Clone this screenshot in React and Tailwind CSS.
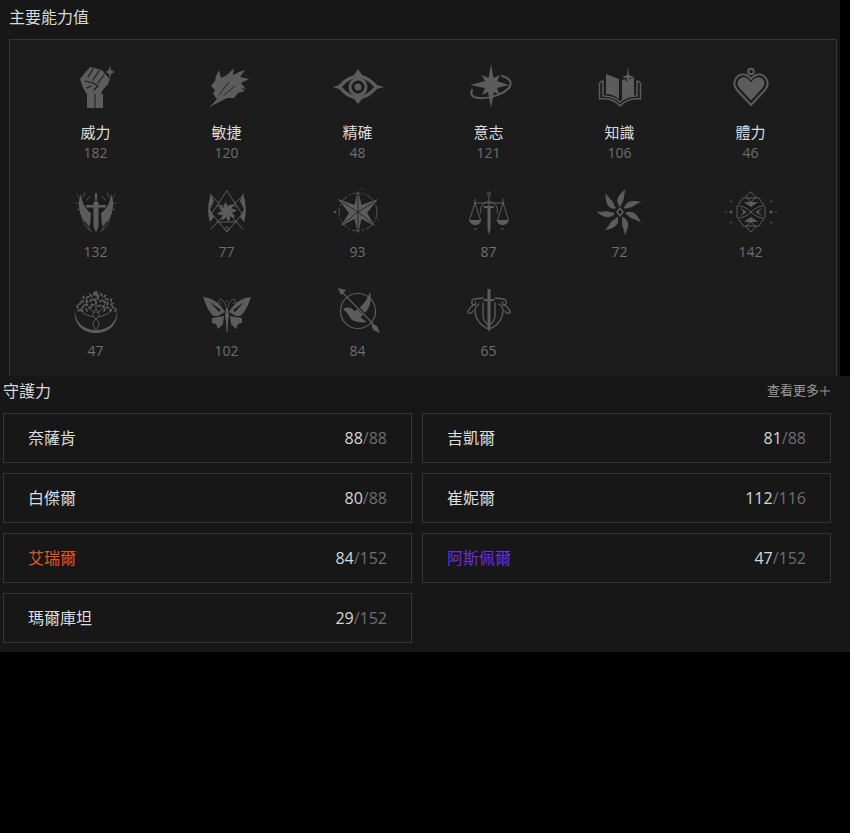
import React from "react";

// all emblems share a 60x60 box, filled with one grey
const Icon = ({ children }) => (
  <svg viewBox="0 0 60 60" className="block h-[60px] w-[60px]" fill="#5c5c5c" stroke="none">
    {children}
  </svg>
);

const Line = ({ children, w = 1, color = "#5c5c5c" }) => (
  <g fill="none" stroke={color} strokeWidth={w} strokeLinecap="round" strokeLinejoin="round">
    {children}
  </g>
);

const turns = (n) => Array.from({ length: n }, (_, i) => (360 / n) * i);

// leaves for the tree crown, laid out on three arcs with a little wobble
const leaves = [8, 13, 17.5].flatMap((r) => {
  const count = Math.round(r * 0.9);
  return Array.from({ length: count }, (_, i) => {
    const a = Math.PI + (Math.PI * (i + 0.5)) / count;
    const wob = Math.sin(i * 2.3 + r) * 1.2;
    return {
      x: 30 + (r + wob) * 1.05 * Math.cos(a),
      y: 31 + (r + wob) * Math.sin(a),
      rot: (i * 67 + r * 31) % 180,
    };
  });
});

const icons = {
  fist: (
    <Icon>
      <path d="M21 37h7.500v14H21zM29.500 37H37v14h-7.500z" />
      <path d="M14 22l4-5 6-7 5 1 3 1 5 2 3 4 4 4-2 5-6 7-1 3H21l-4-6z" />
      <Line w={1.200} color="#1c1c1c">
        <path d="M27 12l-5 8M33 14l-6 9M38 18l-6 8M19 24l8 2 5 3-4 4M21 31l4-2" />
      </Line>
      <path d="M44 9l1.200 4.300L48.500 15l-3.300 1.700L44 21l-1.200-4.300L39.500 15l3.300-1.700z" />
    </Icon>
  ),
  wing: (
    <Icon>
      <path d="M12.500 50l7.500-8-4-5 2-4-4-4 4-5 1-5 3-6 2 8 4-2 3-2 6-6-1 7 6-3 6-2-5 7 9 2-8 4 5 6-5-1 4 3-7 2-4 5h-7z" />
      <Line w={0.900} color="#1c1c1c">
        <path d="M22 38l10-13M27 38l11-9" />
      </Line>
    </Icon>
  ),
  eye: (
    <Icon>
      <path
        fillRule="evenodd"
        d="M5 30l6-2c5-6 11-9 15-10l4-6 4 6c4 1 10 4 15 10l7 2-7 2c-5 6-11 9-15 10l-4 5-4-5c-4-1-10-4-15-10zM14 30c5 6 11 9 16 9s11-3 16-9c-5-6-11-9-16-9s-11 3-16 9z"
      />
      <path
        fillRule="evenodd"
        d="M30 20.500a9.500 9.500 0 1 1 0 19 9.500 9.500 0 0 1 0-19zM30 23.500a6.500 6.500 0 1 0 0 13 6.500 6.500 0 0 0 0-13z"
      />
      <circle cx="30" cy="30" r="3.500" />
    </Icon>
  ),
  will: (
    <Icon>
      <path d="M32 7l2.500 14 6.500-3-3 6 12 4-12 3 3 7-6-3-3 16-3-16-6 3 3-7-15-3 15-4-3-6 6.500 3z" />
      <Line w={2}>
        <path d="M43 19c7 2 10 5 8 10-4 8-21 13-31 12-6 0-9-3-7-8" />
      </Line>
    </Icon>
  ),
  book: (
    <Icon>
      <path d="M16 17l13 5v20c-5-4-9-5-13-5z" />
      <path d="M32 23c2-1 3-1 3-1l2 3 2-3 4-1 1-2v20c-5 0-9 1-12 4z" />
      <path d="M38 10l1 8 5 2-5 1.500-1 8.500-1-8.500-5-1.500 5-2z" />
      <Line w={1.500}>
        <path d="M12 24l-2.500 2v16c8-1 14 0 20.500 7 6-7 13-8 20.500-7V26L48 24" />
        <path d="M13 24v15c7 0 13 2 17 6 4-4 10-6 17-6V24" />
      </Line>
    </Icon>
  ),
  heart: (
    <Icon>
      <Line w={2}>
        <circle cx="30" cy="14.500" r="2.800" />
        <path d="M30 48l-14-15c-7-9 2-18 9-15 2 1 4 2 5 4 1-2 3-3 5-4 7-3 16 6 9 15z" />
      </Line>
      <path d="M30 43.500l-11.500-12.500c-5-6.500 1-12 6-10.500 2.500 1 4.500 3 5.500 5 1-2 3-4 5.500-5 5-1.500 11 4 6 10.500z" />
    </Icon>
  ),
  sword: (
    <Icon>
      <path d="M27.500 20h5v24l-2.500 7-2.500-7z" />
      <path d="M20 23h20v2.500H20zM28.500 14l1.500-4 1.500 4-1 6h-1z" />
      <path d="M24 44c-7-4-12-13-11-24 0-3 1-6 2-8 1 9 4 15 10 19zM36 44c7-4 12-13 11-24 0-3-1-6-2-8-1 9-4 15-10 19z" />
      <Line w={0.800}>
        <path d="M14 16l-3-3M14 22l-4-1M14 27l-3 1M17 15l2-4M21 18l3-4M46 16l3-3M46 22l4-1M46 27l3 1M43 15l-2-4M39 18l-3-4" />
        <path d="M16 34c1 7 4 12 9 15M44 34c-1 7-4 12-9 15M22 43c0 3 1 5 3 6M38 43c0 3-1 5-3 6" />
      </Line>
    </Icon>
  ),
  scythe: (
    <Icon>
      <Line w={1}>
        <path d="M30 9l15 23-15 18-15-18zM13 12l33 35M47 12L14 47M20 24h20M20 40h20" />
        <circle cx="30" cy="47" r="2" />
      </Line>
      <path d="M14 12l3 7-4 8 4 8-4 5c-3-9-2-20 1-28zM46 12l-3 7 4 8-4 8 4 5c3-9 2-20-1-28z" />
      {turns(8).map((t) => (
        <path key={t} d="M30 30c-1-4 1-7 6-8-1 4-2 6-6 8z" transform={`rotate(${t} 30 30)`} />
      ))}
    </Icon>
  ),
  compass: (
    <Icon>
      <path d="M30 8l3.500 15L50 17l-11 14 8 13-13.500-7L30 52l-3.500-15L13 44l8-13-11-14 16.500 6z" />
      <Line w={0.800} color="#1c1c1c">
        <path d="M30 11v38M14 20l16 10 16-10M16 41l14-11 14 11" />
      </Line>
      <Line w={0.900}>
        <circle cx="30" cy="30" r="19" strokeDasharray="7 3 1 3" />
      </Line>
      <circle cx="34" cy="7" r="0.700" />
      <circle cx="7" cy="30" r="1.300" />
      <circle cx="50" cy="38" r="0.700" />
    </Icon>
  ),
  scales: (
    <Icon>
      <path d="M28.500 24h3v23l-1.500 6-1.500-6z" />
      <path d="M25 24h10v2H25z" />
      <Line w={1}>
        <circle cx="30" cy="11.500" r="1.500" />
        <path d="M30 13v11M15 21h30M22 31a8.500 8.500 0 1 1 16 0" />
        <path d="M16 21v-4M44 21v-4M16 21l-5.500 17M16 21l5.500 17M44 21l-5.500 17M44 21l5.500 17" />
      </Line>
      <path d="M10 38h12.500c-1 3.500-3 5-6.200 5S11 41.500 10 38zM37.500 38H50c-1 3.500-3 5-6.300 5s-5.200-1.500-6.200-5z" />
      <circle cx="16.500" cy="47" r="1" />
      <circle cx="43.500" cy="47" r="1" />
    </Icon>
  ),
  swirl: (
    <Icon>
      {turns(7).map((t) => (
        <g key={t} transform={`rotate(${t} 30 30)`}>
          <path d="M30 24c-5-4-3-11 6-17-3 5-1 8-3 12-1 2-2 4-3 5z" />
          <path d="M34 25c4-4 9-5 15-3-5 0-10 2-14 5z" />
        </g>
      ))}
      <path d="M30 25l4 5-4 5-4-5zM30 27.500l-2 2.500 2 2.500 2-2.500z" fillRule="evenodd" />
    </Icon>
  ),
  hourglass: (
    <Icon>
      <Line w={1}>
        <path d="M22 16h16l6 9v10l-6 9H22l-6-9V25z" />
        <path d="M30 10l5 5-5 5-5-5zM30 40l5 5-5 5-5-5z" />
        <path d="M18 24c4 0 9 3 12 6 3-3 8-6 12-6M18 36c4 0 9-3 12-6 3 3 8 6 12 6" />
        <path d="M20 27l5 3-5 3M40 27l-5 3 5 3" />
        <path d="M11 20l-2-1M49 20l2-1M11 40l-2 1M49 40l2 1" />
      </Line>
      <circle cx="10" cy="30" r="1.500" />
      <circle cx="5" cy="30" r="0.800" />
      <circle cx="50" cy="30" r="1.500" />
      <circle cx="55" cy="30" r="0.800" />
      <circle cx="23" cy="30" r="1.200" />
      <circle cx="37" cy="30" r="1.200" />
      <path d="M23 20h14l-7 5zM23 40h14l-7-5z" />
    </Icon>
  ),
  tree: (
    <Icon>
      <path d="M9 29c0 13 9 20 21 20s21-7 21-20c2 13-7 23-21 23S7 42 9 29z" />
      <path d="M30 9l1 2.500h2.500l-2 1.500.8 2.500-2.300-1.500-2.300 1.500.8-2.500-2-1.500H29z" />
      {leaves.map((l, i) => (
        <ellipse
          key={i}
          cx={l.x}
          cy={l.y}
          rx="2.200"
          ry="1"
          transform={`rotate(${l.rot} ${l.x} ${l.y})`}
        />
      ))}
      <Line w={1}>
        <path d="M30 48c-4-3-4-7 0-10 4-3 4-6 1-9M30 48c4-3 4-7 0-10-4-3-4-6-1-9" />
        <path d="M28 36c-5-1-12-3-14-8M32 36c5-1 12-3 14-8M30 30v-13M29 32c-4-3-8-6-9-12M31 32c4-3 8-6 9-12" />
      </Line>
    </Icon>
  ),
  butterfly: (
    <Icon>
      <path d="M6 16c7 1 15 3 22 15l-7 4-4 0C12 32 9 24 6 16zM54 16c-7 1-15 3-22 15l7 4 4 0c5-3 8-11 11-19z" />
      <path d="M15 37l12-2-1 8-5 5-2-5-4-1zM45 37l-12-2 1 8 5 5 2-5 4-1z" />
      <path d="M29 27h2l1 8-1 6-.5 10h-1l-.5-10-1-6z" />
      <Line w={0.900}>
        <path d="M29 26c-1-5-4-9-7-7-2 2 0 4 2 3M31 26c1-5 4-9 7-7 2 2 0 4-2 3" />
      </Line>
      <circle cx="30" cy="20" r="0.800" />
      <path d="M13 21l11 8-2 2zM47 21l-11 8 2 2z" fill="#1c1c1c" />
    </Icon>
  ),
  arrow: (
    <Icon>
      <Line w={1.200}>
        <circle cx="30" cy="30" r="17.500" />
      </Line>
      <path d="M42 11c2 9 0 17-8 24-4 3-8 5-10 4l-1-8c7-1 15-9 19-20z" />
      <path d="M15 28c5-3 9-1 11 2l6 6 7 5c-6 1-13 0-16-3-2-3-4-7-8-10z" />
      <Line w={3} color="#1c1c1c">
        <path d="M22 19l15 15" />
      </Line>
      <Line w={1.200}>
        <path d="M13 10l36 37" />
      </Line>
      <path d="M10 7l8 2-5 5zM43 43l6 2 3 7-7-3z" />
    </Icon>
  ),
  shield: (
    <Icon>
      <path d="M28.500 8h3v10h4v2h-4v27l-1.500 4-1.500-4V20h-4v-2h4z" />
      <Line w={1.300}>
        <path d="M20 23c-3 2-4 4-4 6 0 9 5 15 13 19M40 23c3 2 4 4 4 6 0 9-5 15-13 19" />
        <path d="M24 17l-9 1c-3 1-3 6 0 6 2 0 2-2 1-3M36 17l9 1c3 1 3 6 0 6-2 0-2-2-1-3" />
        <path d="M15 24c-4 2-6 5-6 8 2 1 4 0 5-2M45 24c4 2 6 5 6 8-2 1-4 0-5-2" />
        <path d="M24 22v13c0 3 2 6 4 8M36 22v13c0 3-2 6-4 8" />
      </Line>
    </Icon>
  ),
};

const stats = [
  { icon: "fist", label: "威力", value: 182 },
  { icon: "wing", label: "敏捷", value: 120 },
  { icon: "eye", label: "精確", value: 48 },
  { icon: "will", label: "意志", value: 121 },
  { icon: "book", label: "知識", value: 106 },
  { icon: "heart", label: "體力", value: 46 },
  { icon: "sword", value: 132 },
  { icon: "scythe", value: 77 },
  { icon: "compass", value: 93 },
  { icon: "scales", value: 87 },
  { icon: "swirl", value: 72 },
  { icon: "hourglass", value: 142 },
  { icon: "tree", value: 47 },
  { icon: "butterfly", value: 102 },
  { icon: "arrow", value: 84 },
  { icon: "shield", value: 65 },
];

const wards = [
  { name: "奈薩肯", cur: 88, max: 88 },
  { name: "吉凱爾", cur: 81, max: 88 },
  { name: "白傑爾", cur: 80, max: 88 },
  { name: "崔妮爾", cur: 112, max: 116 },
  { name: "艾瑞爾", cur: 84, max: 152, color: "text-[#e5531f]" },
  { name: "阿斯佩爾", cur: 47, max: 152, color: "text-[#6a2ee0]" },
  { name: "瑪爾庫坦", cur: 29, max: 152 },
];

export default function App() {
  return (
    <div className="min-h-[833px] bg-black font-['Open_Sans','Noto_Sans_CJK_TC',sans-serif]">
      <section className="h-[376px] w-[840px] overflow-hidden bg-[#171717]">
        <h2 className="pl-[9px] pt-[6px] text-[16px] leading-[22px] text-[#d8d8d8]">主要能力值</h2>
        <div className="ml-[9px] mt-[11px] h-[400px] w-[828px] border border-[#363636] bg-[#1c1c1c] pl-[20px] pt-[17px]">
          <div className="grid w-[786px] grid-cols-6 gap-y-[19px]">
            {stats.map((s) => (
              <div key={s.icon} className="flex flex-col items-center">
                {icons[s.icon]}
                {s.label && (
                  <div className="mt-[5px] h-[21px] text-[15px] leading-[20px] text-[#dcdcdc]">{s.label}</div>
                )}
                <div className="h-[20px] text-[14px] leading-[20px] text-[#6e6e6e]">{s.value}</div>
              </div>
            ))}
          </div>
        </div>
      </section>

      <section className="h-[276px] w-[850px] bg-[#171717] px-[3px]">
        <div className="flex h-[37px] w-[828px] items-start justify-between pt-[3px]">
          <h2 className="text-[16px] leading-[24px] text-[#d8d8d8]">守護力</h2>
          <div className="flex items-center text-[13px] leading-[23px] text-[#999999]">
            查看更多
            <svg viewBox="0 0 12 12" className="h-[12px] w-[12px]" fill="none" stroke="#999999" strokeWidth="1">
              <path d="M6 1v10M1 6h10" />
            </svg>
          </div>
        </div>
        <div className="grid w-[828px] grid-cols-2 gap-x-[10px] gap-y-[10px]">
          {wards.map((w) => (
            <div
              key={w.name}
              className="flex h-[50px] items-center justify-between border border-[#363636] pl-[24px] pr-[24px] text-[16px]"
            >
              <span className={w.color || "text-[#dcdcdc]"}>{w.name}</span>
              <span className="text-[#6e6e6e]">
                <span className="text-[#d6d6d6]">{w.cur}</span>/{w.max}
              </span>
            </div>
          ))}
        </div>
      </section>
    </div>
  );
}
